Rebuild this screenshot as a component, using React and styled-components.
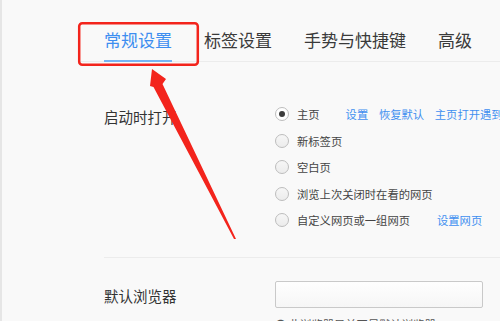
import styled, { createGlobalStyle } from 'styled-components';

const GlobalStyle = createGlobalStyle`
  html, body, #root {
    margin: 0;
    height: 100%;
    overflow: hidden;
  }
  body {
    background: #f9f9f9;
    font-family: "Noto Sans CJK SC", "Noto Sans", sans-serif;
    color: #333;
  }
`;

const Page = styled.div`
  position: relative;
  height: 321px;
  border-left: 2px solid #e6e6e6;
  background: #f9f9f9;
  overflow: hidden;
`;

const TabBar = styled.nav`
  display: flex;
  gap: 32px;
  margin-left: 78px;
  padding: 30px 0 0 24px;
  border-bottom: 1px solid #ececec;
`;

const Tab = styled.span`
  font-size: 17px;
  line-height: 20px;
  padding-bottom: 10px;
  margin-bottom: -1px;
  white-space: nowrap;
  color: ${(p) => (p.$active ? '#3d8ef0' : '#3a3a3a')};
  border-bottom: 2px solid ${(p) => (p.$active ? '#76b4f4' : 'transparent')};
`;

const Section = styled.section`
  display: grid;
  grid-template-columns: 171px 1fr;
  margin-left: 102px;
  padding: ${(p) => p.$pad};
  border-bottom: ${(p) => (p.$divider ? '1px solid #ececec' : 'none')};
`;

const Label = styled.div`
  font-size: 14.5px;
  line-height: 26px;
  padding-top: ${(p) => p.$offset || 0}px;
  color: #333;
  white-space: nowrap;
`;

const Options = styled.div`
  display: flex;
  flex-direction: column;
`;

const OptionRow = styled.label`
  display: flex;
  align-items: center;
  gap: 8px;
  height: 26.5px;
  font-size: 11.3px;
  color: #444;
  white-space: nowrap;
`;

const Radio = styled.span`
  position: relative;
  width: 14px;
  height: 14px;
  flex: none;
  box-sizing: border-box;
  border-radius: 50%;
  border: 1px solid #bdbdbd;
  background: ${(p) => (p.$checked ? '#fff' : 'linear-gradient(#f6f6f6, #ececec)')};
  &::after {
    content: '';
    display: ${(p) => (p.$checked ? 'block' : 'none')};
    position: absolute;
    left: 3px;
    top: 3px;
    width: 6px;
    height: 6px;
    border-radius: 50%;
    background: #3c3c3c;
  }
`;

const Links = styled.span`
  display: flex;
  gap: 10.7px;
  margin-left: ${(p) => p.$space}px;
`;

const LinkText = styled.a`
  color: #3f8ff0;
  text-decoration: none;
  cursor: pointer;
`;

const Field = styled.div`
  display: flex;
  flex-direction: column;
  gap: 8px;
`;

const TextBox = styled.div`
  width: 208px;
  height: 27px;
  box-sizing: border-box;
  border: 1px solid #c9c9c9;
  border-radius: 2px;
  background: linear-gradient(#fefefe, #f6f6f6);
`;

const Hint = styled.div`
  font-size: 11.3px;
  color: #555;
  white-space: nowrap;
`;

const Annotation = styled.svg`
  position: absolute;
  left: -2px;
  top: 0;
  width: 500px;
  height: 321px;
  pointer-events: none;
`;

const startOptions = [
  { text: '主页', checked: true, space: 18, links: ['设置', '恢复默认', '主页打开遇到问题？'] },
  { text: '新标签页' },
  { text: '空白页' },
  { text: '浏览上次关闭时在看的网页' },
  { text: '自定义网页或一组网页', space: 19, links: ['设置网页'] },
];

const tabs = ['常规设置', '标签设置', '手势与快捷键', '高级'];

const App = () => {
  return (
    <>
      <GlobalStyle />
      <Page>
        <TabBar>
          {tabs.map((t, i) => (
            <Tab key={t} $active={i === 0}>{t}</Tab>
          ))}
        </TabBar>

        <Section $pad="39px 0 23.5px" $divider>
          <Label $offset={3}>启动时打开</Label>
          <Options>
            {startOptions.map((o) => (
              <OptionRow key={o.text}>
                <Radio $checked={o.checked} />
                <span>{o.text}</span>
                {o.links && (
                  <Links $space={o.space}>
                    {o.links.map((l) => (
                      <LinkText key={l}>{l}</LinkText>
                    ))}
                  </Links>
                )}
              </OptionRow>
            ))}
          </Options>
        </Section>

        <Section $pad="23px 0 0">
          <Label $offset={2}>默认浏览器</Label>
          <Field>
            <TextBox />
            <Hint>● 此浏览器目前不是默认浏览器</Hint>
          </Field>
        </Section>

        <Annotation viewBox="0 0 500 321">
          <rect x="79.2" y="23.2" width="118.6" height="41.6" rx="3" fill="none" stroke="#f3241c" strokeWidth="2.5" />
          <polygon
            points="152,69 166,79 162.5,84 236,239 234,239 153.5,87 150,86"
            fill="#f3241c"
          />
        </Annotation>
      </Page>
    </>
  );
};

export default App;
